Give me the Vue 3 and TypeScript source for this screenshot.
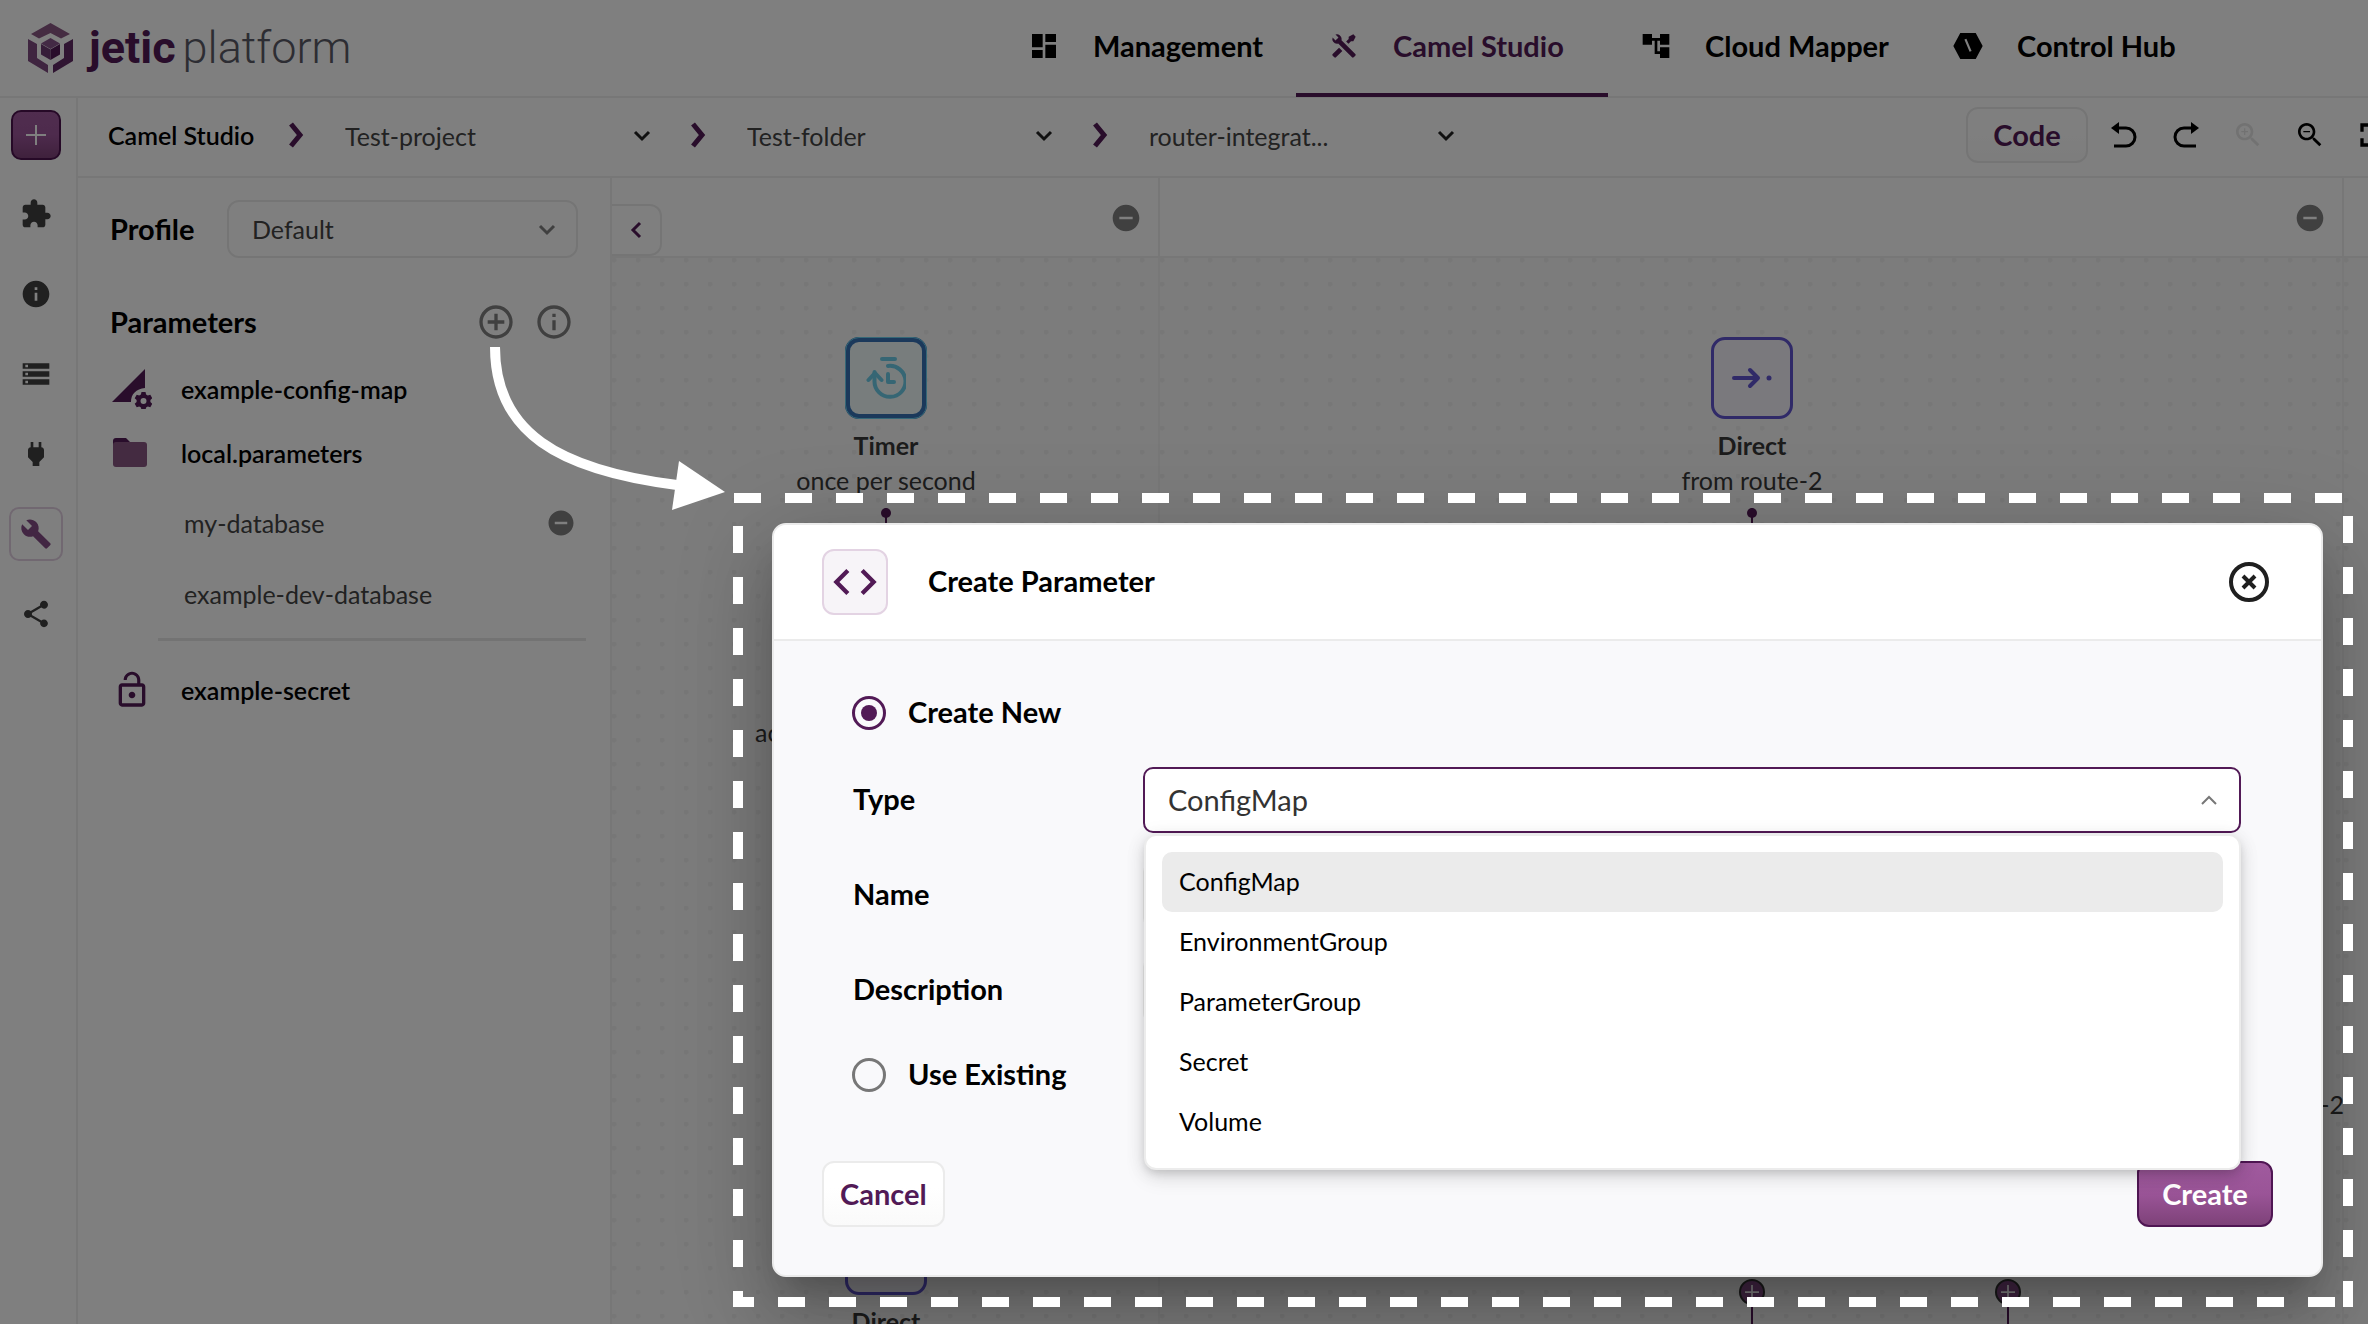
<script setup lang="ts">
import { ref } from 'vue'

const disc = 'M12 2C6.48 2 2 6.48 2 12s4.48 10 10 10 10-4.48 10-10S17.52 2 12 2z'
const ring = disc + 'm0 18c-4.41 0-8-3.59-8-8s3.59-8 8-8 8 3.59 8 8-3.59 8-8 8z'
const lens =
  'M15.5 14h-.79l-.28-.27C15.41 12.59 16 11.11 16 9.5 16 5.91 13.09 3 9.5 3S3 5.91 3 9.5 5.91 16 9.5 16c1.61 0 3.09-.59 4.23-1.57l.27.28v.79l5 4.99L20.49 19l-4.99-5zm-6 0C7.01 14 5 11.99 5 9.5S7.01 5 9.5 5 14 7.01 14 9.5 11.99 14 9.5 14z'

const icons = {
  management: 'M3 13h8V3H3v10zm0 8h8v-6H3v6zm10 0h8V11h-8v10zm0-18v6h8V3h-8z',
  studio:
    'M21.71 20.29L20.29 21.71A1 1 0 0 1 18.88 21.71L7 9.85A3.81 3.81 0 0 1 6 10A4 4 0 0 1 2.22 4.7L4.76 7.24L5.29 6.71L6.71 5.29L7.24 4.76L4.7 2.22A4 4 0 0 1 10 6A3.81 3.81 0 0 1 9.85 7L21.71 18.88A1 1 0 0 1 21.71 20.29M2.29 18.88A1 1 0 0 0 2.29 20.29L3.71 21.71A1 1 0 0 0 5.12 21.71L10.59 16.25L7.76 13.42M20 2L16 4V6L13.83 8.17L15.83 10.17L18 8H20L22 4Z',
  mapper: 'M22 11V3h-7v3H9V3H2v8h7V8h2v10h4v3h7v-8h-7v3h-2V8h2v3z',
  hub: 'M1 12L6.2 2.3h11.6L23 12l-5.2 9.7H6.2zM9.3 7.2l3.9 9.2 1.5-.6-3.9-9.2z',
  puzzle:
    'M20.5 11H19V7c0-1.1-.9-2-2-2h-4V3.5C13 2.12 11.88 1 10.5 1S8 2.12 8 3.5V5H4c-1.1 0-1.99.9-1.99 2v3.8H3.5c1.49 0 2.7 1.21 2.7 2.7s-1.21 2.7-2.7 2.7H2V20c0 1.1.9 2 2 2h3.8v-1.5c0-1.49 1.21-2.7 2.7-2.7 1.49 0 2.7 1.21 2.7 2.7V22H17c1.1 0 2-.9 2-2v-4h1.5c1.38 0 2.5-1.12 2.5-2.5S21.88 11 20.5 11z',
  info: disc + 'm1 15h-2v-6h2v6zm0-8h-2V7h2v2z',
  storage:
    'M2 20h20v-4H2v4zm2-3h2v2H4v-2zM2 4v4h20V4H2zm4 3H4V5h2v2zm-4 7h20v-4H2v4zm2-3h2v2H4v-2z',
  plug: 'M16.01 7L16 3h-2v4h-4V3H8v4h-.01C7 6.99 6 7.99 6 8.99v5.49L9.5 18v3h5v-3l3.5-3.51v-5.5c0-1-1-2-1.99-1.99z',
  wrench:
    'M22.7 19l-9.1-9.1c.9-2.3.4-5-1.5-6.9-2-2-5-2.4-7.4-1.3L9 6 6 9 1.6 4.7C.4 7.1.9 10.1 2.9 12.1c1.9 1.9 4.6 2.4 6.9 1.5l9.1 9.1c.4.4 1 .4 1.4 0l2.3-2.3c.5-.4.5-1.1.1-1.4z',
  share:
    'M18 16.08c-.76 0-1.44.3-1.96.77L8.91 12.7c.05-.23.09-.46.09-.7s-.04-.47-.09-.7l7.05-4.11c.54.5 1.25.81 2.04.81 1.66 0 3-1.34 3-3s-1.34-3-3-3-3 1.34-3 3c0 .24.04.47.09.7L8.04 9.81C7.5 9.31 6.79 9 6 9c-1.66 0-3 1.34-3 3s1.34 3 3 3c.79 0 1.5-.31 2.04-.81l7.12 4.16c-.05.21-.08.43-.08.65 0 1.61 1.31 2.92 2.92 2.92s2.92-1.31 2.92-2.92c0-1.61-1.31-2.92-2.92-2.92z',
  minus: disc + 'm5 11H7v-2h10v2z',
  addOutline: ring + 'M13 7h-2v4H7v2h4v4h2v-4h4v-2h-4V7z',
  infoOutline: ring + 'M11 7h2v2h-2zm0 4h2v6h-2z',
  lockOpen:
    'M12 17c1.1 0 2-.9 2-2s-.9-2-2-2-2 .9-2 2 .9 2 2 2zm6-9h-1V6c0-2.76-2.24-5-5-5S7 3.24 7 6h1.9c0-1.71 1.39-3.1 3.1-3.1 1.71 0 3.1 1.39 3.1 3.1v2H6c-1.1 0-2 .9-2 2v10c0 1.1.9 2 2 2h12c1.1 0 2-.9 2-2V10c0-1.1-.9-2-2-2zm0 12H6V10h12v10z',
  zoomIn: lens + 'M12 10h-2v2H9v-2H7V9h2V7h1v2h2v1z',
  zoomOut: lens + 'M7 9h5v1H7z',
  fullscreen: 'M7 14H5v5h5v-2H7v-3zm-2-4h2V7h3V5H5v5zm12 7h-3v2h5v-5h-2v3zM14 5v2h3v3h2V5h-5z',
  code: 'M9.4 16.6L4.8 12l4.6-4.6L8 6l-6 6 6 6 1.4-1.4zm5.2 0l4.6-4.6-4.6-4.6L16 6l6 6-6 6-1.4-1.4z',
}

const tabs = [
  { label: 'Management', icon: icons.management, size: 32, active: false },
  { label: 'Camel Studio', icon: icons.studio, size: 28, active: true },
  { label: 'Cloud Mapper', icon: icons.mapper, size: 32, active: false },
  { label: 'Control Hub', icon: icons.hub, size: 32, active: false },
]

const tools = [
  { label: 'Components', icon: icons.puzzle, active: false },
  { label: 'Information', icon: icons.info, active: false },
  { label: 'Resources', icon: icons.storage, active: false },
  { label: 'Connections', icon: icons.plug, active: false },
  { label: 'Parameters', icon: icons.wrench, active: true },
  { label: 'Share', icon: icons.share, active: false },
]

const crumbs = ['Test-project', 'Test-folder', 'router-integrat...']
const types = ['ConfigMap', 'EnvironmentGroup', 'ParameterGroup', 'Secret', 'Volume']
const type = ref('ConfigMap')
const mode = ref('new')
const name = ref('')
const description = ref('')
</script>

<template>
  <div class="page">
    <header class="topbar">
      <a class="logo" href="#">
        <svg class="logo-mark" viewBox="0 0 46 50" aria-hidden="true">
          <path d="M22.500 0L42 11l-9 4.500L22.500 10 11 15.500 3 11z" fill="#8a5884" />
          <path d="M0 16l9 5v14l11 7v8L0 38z" fill="#7e4a80" />
          <path d="M45 16v22L25 50v-8l11-7V21z" fill="#602a64" />
          <path d="M22.500 15l9.500 5.500-9.500 5.500-9.500-5.500z" fill="#86548a" />
          <path d="M13 21l9.500 5.500V37L13 31.500z" fill="#6c3a72" />
          <path d="M32 21l-9.500 5.500V37l9.500-5.500z" fill="#531b57" />
        </svg>
        <span class="logo-name">jetic</span>
        <span class="logo-sub">platform</span>
      </a>
      <nav class="tabs">
        <a v-for="tab in tabs" :key="tab.label" href="#" class="tab" :class="{ active: tab.active }">
          <svg class="tab-icon" viewBox="0 0 32 32" aria-hidden="true">
            <svg :x="(32 - tab.size) / 2" :y="(32 - tab.size) / 2" :width="tab.size" :height="tab.size" viewBox="0 0 24 24">
              <path :d="tab.icon" fill="currentColor" fill-rule="evenodd" />
            </svg>
          </svg>
          {{ tab.label }}
        </a>
      </nav>
    </header>

    <div class="workspace">
      <aside class="rail">
        <button class="add" type="button" aria-label="Add">
          <svg viewBox="0 0 20 20"><path d="M10 0v20M0 10h20" stroke="#fff" stroke-width="2" /></svg>
        </button>
        <button
          v-for="tool in tools"
          :key="tool.label"
          type="button"
          class="tool"
          :class="{ active: tool.active }"
          :aria-label="tool.label"
        >
          <svg viewBox="0 0 24 24"><path :d="tool.icon" fill="currentColor" fill-rule="evenodd" /></svg>
        </button>
      </aside>

      <div class="main">
        <div class="subbar">
          <a class="crumb-root" href="#">Camel Studio</a>
          <template v-for="crumb in crumbs" :key="crumb">
            <svg class="sep" viewBox="0 0 24 28" aria-hidden="true"><path d="M7 3l9 11-9 11" /></svg>
            <span class="crumb">
              <select :aria-label="crumb">
                <option>{{ crumb }}</option>
              </select>
              <svg class="down dark" viewBox="0 0 18 12" aria-hidden="true"><path d="M2 2l7 7 7-7" /></svg>
            </span>
          </template>
          <div class="actions">
            <button class="btn code-btn" type="button">Code</button>
            <button class="action" type="button" aria-label="Undo">
              <svg class="turn" viewBox="0 0 28 28">
                <path d="M7 7h9a9 9 0 0 1 0 18H4" fill="none" stroke="#000" stroke-width="3" />
                <path d="M1 7l8-6v12z" />
              </svg>
            </button>
            <button class="action" type="button" aria-label="Redo">
              <svg class="turn" viewBox="0 0 28 28">
                <path d="M21 7h-9a9 9 0 0 0 0 18h12" fill="none" stroke="#000" stroke-width="3" />
                <path d="M27 7l-8-6v12z" />
              </svg>
            </button>
            <button class="action faded" type="button" aria-label="Zoom in" disabled>
              <svg viewBox="0 0 24 24"><path :d="icons.zoomIn" /></svg>
            </button>
            <button class="action" type="button" aria-label="Zoom out">
              <svg viewBox="0 0 24 24"><path :d="icons.zoomOut" /></svg>
            </button>
            <button class="action" type="button" aria-label="Fullscreen">
              <svg class="wide" viewBox="0 0 24 24"><path :d="icons.fullscreen" /></svg>
            </button>
          </div>
        </div>

        <div class="panes">
          <section class="sidebar">
            <div class="profile">
              <label for="profile">Profile</label>
              <span class="profile-field">
                <select id="profile">
                  <option>Default</option>
                </select>
                <svg class="down" viewBox="0 0 18 12" aria-hidden="true"><path d="M2 2l7 7 7-7" /></svg>
              </span>
            </div>
            <div class="section-head">
              <h2>Parameters</h2>
              <button type="button" aria-label="Add parameter">
                <svg viewBox="0 0 24 24"><path :d="icons.addOutline" fill="currentColor" /></svg>
              </button>
              <button type="button" aria-label="About parameters">
                <svg viewBox="0 0 24 24"><path :d="icons.infoOutline" fill="currentColor" /></svg>
              </button>
            </div>
            <ul class="params">
              <li class="param">
                <svg class="param-icon" viewBox="0 0 40 40" aria-hidden="true">
                  <path d="M0 33L33 0v19c-9 1-14 6-14 14z" fill="#521a56" />
                  <path
                    fill="#521a56"
                    fill-rule="evenodd"
                    d="M29.500 23h4l.6 2.500 1.700 1 2.500-.8 2 3.500-1.900 1.800v2l1.900 1.800-2 3.500-2.500-.8-1.700 1-.6 2.500h-4l-.6-2.500-1.700-1-2.500.8-2-3.500 1.900-1.800v-2l-1.900-1.800 2-3.500 2.500.8 1.700-1zM31.500 29a3 3 0 1 0 0 6 3 3 0 0 0 0-6z"
                  />
                </svg>
                <span>example-config-map</span>
              </li>
              <li class="param">
                <svg class="param-icon" viewBox="0 0 40 40" aria-hidden="true">
                  <path d="M1 10V8a3 3 0 0 1 3-3h10l4 4v4H1z" fill="#521a56" />
                  <rect x="1" y="9" width="34" height="25" rx="3" fill="#885682" />
                </svg>
                <span>local.parameters</span>
              </li>
              <li>
                <ul class="children">
                  <li>
                    <span>my-database</span>
                    <button type="button" aria-label="Remove my-database">
                      <svg viewBox="0 0 24 24"><path :d="icons.minus" fill="currentColor" /></svg>
                    </button>
                  </li>
                  <li><span>example-dev-database</span></li>
                </ul>
              </li>
              <li class="param secret">
                <svg class="param-icon" viewBox="0 0 24 24" aria-hidden="true">
                  <path :d="icons.lockOpen" fill="#521a56" />
                </svg>
                <span>example-secret</span>
              </li>
            </ul>
          </section>

          <section class="canvas">
            <button class="collapse" type="button" aria-label="Collapse panel">
              <svg viewBox="0 0 12 18"><path d="M10 2L3 9l7 7" /></svg>
            </button>
            <div class="lane lane-a">
              <div class="lane-head">
                <button type="button" aria-label="Collapse lane">
                  <svg viewBox="0 0 24 24"><path :d="icons.minus" fill="currentColor" /></svg>
                </button>
              </div>
              <div class="lane-body">
                <div class="node node-timer">
                  <div class="tile timer">
                    <svg viewBox="0 0 40 44" aria-hidden="true">
                      <path d="M16 3h13" />
                      <path d="M22 10a15.500 15.500 0 1 1-13.500 15V16" />
                      <path d="M2.500 24l6.500-7 6.500 7" />
                      <path d="M22 18v8h6" />
                    </svg>
                  </div>
                  <strong>Timer</strong>
                  <span>once per second</span>
                </div>
                <i class="stem stem-a"></i>
                <span class="clipped action-label">ac</span>
                <div class="node node-lower">
                  <div class="tile direct"></div>
                  <strong>Direct</strong>
                </div>
              </div>
            </div>
            <div class="lane lane-b">
              <div class="lane-head">
                <button type="button" aria-label="Collapse lane">
                  <svg viewBox="0 0 24 24"><path :d="icons.minus" fill="currentColor" /></svg>
                </button>
              </div>
              <div class="lane-body">
                <div class="node node-direct">
                  <div class="tile direct">
                    <svg viewBox="0 0 44 44" aria-hidden="true">
                      <path d="M4 22h24M20 14l8 8-8 8" />
                      <circle cx="39" cy="22" r="2.500" />
                    </svg>
                  </div>
                  <strong>Direct</strong>
                  <span>from route-2</span>
                </div>
                <i class="stem stem-b"></i>
                <span class="clipped route-label">-2</span>
                <button class="plus plus-a" type="button" aria-label="Add step">
                  <svg viewBox="0 0 16 16"><path d="M8 0v16M0 8h16" /></svg>
                </button>
                <button class="plus plus-b" type="button" aria-label="Add branch">
                  <svg viewBox="0 0 16 16"><path d="M8 0v16M0 8h16" /></svg>
                </button>
              </div>
            </div>
            <div class="lane lane-c">
              <div class="lane-head"></div>
              <div class="lane-body"></div>
            </div>
          </section>
        </div>
      </div>
    </div>

    <div class="backdrop"></div>

    <div class="callout">
      <section class="dialog" role="dialog" aria-labelledby="dialog-title">
        <header class="dialog-head">
          <span class="badge">
            <svg viewBox="0 0 24 24" aria-hidden="true"><path :d="icons.code" fill="currentColor" /></svg>
          </span>
          <h1 id="dialog-title">Create Parameter</h1>
          <button class="close" type="button" aria-label="Close">
            <svg viewBox="0 0 40 40">
              <circle cx="20" cy="20" r="18" />
              <path d="M14 14l12 12M26 14L14 26" />
            </svg>
          </button>
        </header>
        <form class="form" @submit.prevent>
          <label class="choice">
            <input v-model="mode" type="radio" name="mode" value="new" />
            <span>Create New</span>
          </label>
          <div class="row type-row">
            <label for="type">Type</label>
            <div class="control">
              <select id="type" v-model="type">
                <option v-for="t in types" :key="t">{{ t }}</option>
              </select>
              <svg class="up" viewBox="0 0 18 12" aria-hidden="true"><path d="M2 10l7-7 7 7" /></svg>
              <ul class="menu" role="listbox" aria-label="Type">
                <li v-for="t in types" :key="t" role="option" :aria-selected="t === type" @click="type = t">{{ t }}</li>
              </ul>
            </div>
          </div>
          <div class="row">
            <label for="name">Name</label>
            <div class="control"><input id="name" v-model="name" type="text" /></div>
          </div>
          <div class="row">
            <label for="description">Description</label>
            <div class="control"><input id="description" v-model="description" type="text" /></div>
          </div>
          <label class="choice existing">
            <input v-model="mode" type="radio" name="mode" value="existing" />
            <span>Use Existing</span>
          </label>
          <footer class="dialog-foot">
            <button class="btn" type="button">Cancel</button>
            <button class="btn primary" type="submit">Create</button>
          </footer>
        </form>
      </section>
    </div>

    <svg class="pointer" viewBox="0 0 260 190" aria-hidden="true">
      <path d="M15 7C15 92 78 130 197 145" fill="none" stroke="#fff" stroke-width="10" />
      <path d="M199 121l46 31-53 18z" fill="#fff" />
    </svg>
  </div>
</template>

<style>
body {
  margin: 0;
}
</style>

<style scoped>
* {
  box-sizing: border-box;
}
.page {
  position: relative;
  display: flex;
  flex-direction: column;
  height: 100vh;
  overflow: hidden;
  background: #fff;
  color: #000;
  font-family: Lato, 'Open Sans', sans-serif;
  font-size: 25px;
  line-height: 36px;
}
button,
select,
input {
  margin: 0;
  padding: 0;
  border: 0;
  background: none;
  color: inherit;
  font: inherit;
  appearance: none;
}
svg {
  display: block;
}
ul {
  margin: 0;
  padding: 0;
  list-style: none;
}
h1,
h2 {
  margin: 0;
  font-size: 29px;
  font-weight: 700;
  line-height: 36px;
}
a {
  color: inherit;
  text-decoration: none;
}

/* top bar */
.topbar {
  display: flex;
  flex: none;
  justify-content: space-between;
  height: 98px;
  padding-left: 28px;
  border-bottom: 2px solid #eee;
}
.logo {
  display: flex;
  align-items: center;
  font-family: Roboto, sans-serif;
  font-size: 45px;
}
.logo-mark {
  width: 46px;
  height: 50px;
  margin-right: 15px;
}
.logo-name {
  margin-right: 7px;
  color: #521a56;
  font-weight: 700;
}
.logo-sub {
  color: #5a5a66;
  font-weight: 300;
}
.tabs {
  display: flex;
}
.tab {
  display: flex;
  align-items: center;
  width: 312px;
  height: 97px;
  padding: 0 0 2px 32px;
  border-bottom: 4px solid transparent;
  font-size: 29px;
  font-weight: 700;
}
.tab:first-child {
  width: 300px;
}
.tab:last-child {
  width: 448px;
}
.tab.active {
  border-color: #521a56;
  color: #521a56;
}
.tab-icon {
  width: 32px;
  height: 32px;
  margin-right: 33px;
}

/* left rail */
.workspace {
  display: flex;
  flex: 1;
  min-height: 0;
}
.rail {
  display: flex;
  flex: none;
  flex-direction: column;
  align-items: center;
  width: 78px;
  padding: 12px 4px 0 0;
  border-right: 2px solid #eee;
}
.add {
  display: grid;
  place-items: center;
  width: 50px;
  height: 50px;
  margin-bottom: 27px;
  border: 2px solid #4c134f;
  border-radius: 10px;
  background: linear-gradient(#a05a9e, #9c569a 50%, #7e4279);
}
.add svg {
  width: 20px;
  height: 20px;
}
.tool {
  display: grid;
  place-items: center;
  width: 54px;
  height: 54px;
  margin-bottom: 26px;
  border: 2px solid transparent;
  border-radius: 10px;
  color: #404040;
}
.tool svg {
  width: 32px;
  height: 32px;
}
.tool.active {
  border-color: #e2d0e2;
  color: #844c86;
}

/* breadcrumb bar */
.main {
  display: flex;
  flex: 1;
  flex-direction: column;
  min-width: 0;
}
.subbar {
  display: flex;
  flex: none;
  gap: 24px;
  align-items: center;
  height: 80px;
  padding: 0 0 4px 30px;
  border-bottom: 2px solid #eee;
}
.crumb-root {
  width: 152px;
  font-weight: 600;
  white-space: nowrap;
}
.sep {
  flex: none;
  width: 24px;
  height: 28px;
  fill: none;
  stroke: #521a56;
  stroke-width: 5;
}
.crumb {
  position: relative;
  flex: none;
  width: 330px;
}
.crumb select {
  width: 100%;
  padding: 2px 0 0 13px;
  color: #444;
}
.down {
  position: absolute;
  top: 50%;
  right: 11px;
  width: 18px;
  height: 12px;
  margin-top: -5px;
  fill: none;
  stroke: #808080;
  stroke-width: 3;
}
.down.dark {
  stroke: #222;
}
.actions {
  display: flex;
  align-items: center;
  margin: 0 -35px 0 auto;
}
.action {
  display: grid;
  place-items: center;
  width: 62px;
  height: 54px;
}
.action svg {
  width: 32px;
  height: 32px;
}
.action svg.turn {
  width: 28px;
  height: 28px;
}
.action svg.wide {
  width: 40px;
  height: 40px;
}
.faded {
  opacity: 0.1;
}
.btn {
  height: 66px;
  padding: 0 16px;
  border: 2px solid #ebebeb;
  border-radius: 12px;
  background: linear-gradient(#fff 40%, #fafafa);
  color: #521a56;
  font-size: 29px;
  font-weight: 700;
}
.code-btn {
  width: 122px;
  height: 56px;
  margin-right: 5px;
}

/* parameters sidebar */
.panes {
  display: flex;
  flex: 1;
  min-height: 0;
}
.sidebar {
  flex: none;
  width: 534px;
  padding: 22px 24px 0 32px;
  border-right: 2px solid #eee;
}
.profile {
  display: flex;
  align-items: center;
  padding-right: 8px;
}
.profile label {
  width: 117px;
  font-size: 29px;
  font-weight: 700;
}
.profile-field {
  position: relative;
  flex: 1;
}
.profile-field select {
  width: 100%;
  height: 58px;
  padding-left: 23px;
  border: 2px solid #ebebeb;
  border-radius: 12px;
  color: #444;
}
.profile-field .down {
  right: 22px;
}
.section-head {
  display: flex;
  gap: 18px;
  align-items: center;
  margin: 44px 12px 15px 0;
}
.section-head h2 {
  flex: 1;
}
.section-head svg {
  width: 40px;
  height: 40px;
}
.section-head button {
  color: #808080;
}
.param {
  display: flex;
  gap: 29px;
  align-items: center;
  height: 64px;
  padding-left: 2px;
  font-weight: 600;
}
.param-icon {
  width: 40px;
  height: 40px;
}
.children {
  margin: 2px 0 17px 48px;
  padding: 0 10px 9px 26px;
  border-bottom: 3px solid #e6e6e6;
  color: #444;
}
.children li {
  display: flex;
  align-items: center;
  justify-content: space-between;
  height: 71px;
}
.children button,
.lane-head button {
  color: #808080;
}
.children svg {
  width: 30px;
  height: 30px;
}

/* flow canvas */
.canvas {
  position: relative;
  display: flex;
  flex: 1;
  min-width: 0;
  overflow: hidden;
  isolation: isolate;
}
.lane {
  display: flex;
  flex: none;
  flex-direction: column;
}
.lane-a {
  width: 548px;
}
.lane-b {
  width: 1184px;
}
.lane-c {
  flex: 1;
}
.lane-head {
  display: flex;
  flex: none;
  align-items: center;
  justify-content: flex-end;
  height: 80px;
  padding: 2px 16px 0 0;
  border-right: 2px solid #eee;
  border-bottom: 2px solid #eee;
}
.lane-head svg {
  width: 32px;
  height: 32px;
}
.lane-body {
  position: relative;
  flex: 1;
  border-right: 2px solid #f0f0f0;
  background: radial-gradient(circle at 2px 2px, #efefef 2px, transparent 3px) 0 0 / 24px 24px #f8f8f8;
}
.lane-c .lane-head,
.lane-c .lane-body {
  border-right: 0;
}
.collapse {
  position: absolute;
  z-index: 1;
  top: 26px;
  left: 0;
  display: grid;
  place-items: center;
  width: 50px;
  height: 52px;
  border: 2px solid #ebebeb;
  border-left: 0;
  border-radius: 0 12px 12px 0;
}
.collapse svg {
  width: 12px;
  height: 18px;
  fill: none;
  stroke: #521a56;
  stroke-width: 3;
}
.node {
  position: absolute;
  display: flex;
  flex-direction: column;
  align-items: center;
  width: 240px;
  color: #383838;
  line-height: 35px;
}
.node-timer {
  top: 79px;
  left: 154px;
}
.node-lower {
  top: 955px;
  left: 154px;
}
.node-direct {
  top: 79px;
  left: 472px;
}
.tile {
  display: grid;
  place-items: center;
  width: 82px;
  height: 82px;
  margin-bottom: 9px;
  border-radius: 14px;
}
.tile svg {
  fill: none;
  stroke-linecap: round;
  stroke-linejoin: round;
  stroke-width: 4;
}
.timer {
  border: 5px solid #3672b6;
  outline: 1px solid #6ad0ee;
  outline-offset: -1px;
  background: #f0fafb;
}
.timer svg {
  width: 40px;
  height: 44px;
  stroke: #6ccde8;
}
.direct {
  border: 3px solid #6054d0;
  background: #f4f2fb;
}
.direct svg {
  width: 44px;
  height: 44px;
  stroke: #6054d0;
}
.direct circle {
  fill: #6054d0;
  stroke: none;
}
.stem {
  position: absolute;
  top: 250px;
  width: 2px;
  height: 40px;
  background: #521a56;
}
.stem::before {
  position: absolute;
  left: -4px;
  width: 10px;
  height: 10px;
  border-radius: 50%;
  background: #521a56;
  content: '';
}
.stem-a {
  left: 273px;
}
.stem-b {
  left: 591px;
}
.clipped {
  position: absolute;
  color: #383838;
}
.action-label {
  top: 456px;
  left: 143px;
}
.route-label {
  top: 828px;
  right: -2px;
}
.plus {
  position: absolute;
  top: 1021px;
  display: grid;
  place-items: center;
  width: 26px;
  height: 26px;
  border: 2px solid #333;
  border-radius: 50%;
  background: #844c86;
}
.plus::after {
  position: absolute;
  top: 22px;
  left: 10px;
  width: 2px;
  height: 40px;
  background: #521a56;
  content: '';
}
.plus svg {
  width: 14px;
  height: 14px;
  stroke: #fff;
  stroke-width: 2;
}
.plus-a {
  left: 579px;
}
.plus-b {
  left: 835px;
}

/* overlay, dashed highlight and arrow */
.backdrop {
  position: absolute;
  inset: 0;
  background: rgba(0, 0, 0, 0.5);
}
.callout {
  position: absolute;
  top: 493px;
  right: 15px;
  left: 733px;
  padding: 30px 30px 30px 39px;
}
.callout::before {
  position: absolute;
  inset: 0;
  z-index: 1;
  background:
    repeating-linear-gradient(90deg, #fff 0 27px, transparent 27px 51px) 1px 0 / calc(100% - 11px) 10px no-repeat,
    repeating-linear-gradient(90deg, #fff 0 27px, transparent 27px 51px) -6px 100% / calc(100% - 10px) 10px no-repeat,
    repeating-linear-gradient(#fff 0 27px, transparent 27px 51px) 0 33px / 10px 100% no-repeat,
    repeating-linear-gradient(#fff 0 27px, transparent 27px 51px) 100% 23px / 10px 100% no-repeat;
  content: '';
  pointer-events: none;
}
.pointer {
  position: absolute;
  top: 340px;
  left: 480px;
  width: 260px;
  height: 190px;
}

/* dialog */
.dialog {
  border: 2px solid #ebebeb;
  border-radius: 14px;
  background: #f9f9fb;
  box-shadow:
    0 22px 30px -14px rgba(0, 0, 0, 0.2),
    0 48px 76px 6px rgba(0, 0, 0, 0.14),
    0 18px 92px 16px rgba(0, 0, 0, 0.12);
}
.dialog-head {
  display: flex;
  gap: 40px;
  align-items: center;
  height: 116px;
  padding: 0 52px 0 48px;
  border-bottom: 2px solid #ebebeb;
  border-radius: 12px 12px 0 0;
  background: #fff;
}
.dialog-head h1 {
  flex: 1;
  padding-bottom: 2px;
}
.badge {
  display: grid;
  place-items: center;
  width: 66px;
  height: 66px;
  border: 2px solid #e3d3e3;
  border-radius: 12px;
  background: #f7f4f8;
  color: #521a56;
}
.badge svg {
  width: 52px;
  height: 52px;
}
.close svg {
  width: 40px;
  height: 40px;
  fill: none;
  stroke: #1f1f1f;
  stroke-width: 4;
}
.form {
  padding: 52px 48px 48px;
}
.choice {
  display: flex;
  gap: 22px;
  align-items: center;
  width: fit-content;
  height: 40px;
  margin-left: 30px;
  font-size: 29px;
  font-weight: 700;
}
.choice span {
  padding-bottom: 2px;
}
.choice input {
  display: grid;
  place-items: center;
  width: 34px;
  height: 34px;
  border: 3px solid #777;
  border-radius: 50%;
}
.choice input:checked {
  border-color: #521a56;
}
.choice input:checked::before {
  width: 16px;
  height: 16px;
  border-radius: 50%;
  background: #521a56;
  content: '';
}
.row {
  display: flex;
  align-items: center;
  margin: 29px 32px 0 31px;
}
.type-row {
  margin-top: 34px;
}
.row > label {
  flex: none;
  width: 290px;
  padding-bottom: 2px;
  font-size: 29px;
  font-weight: 700;
}
.control {
  position: relative;
  flex: 1;
}
.control input,
.control select {
  display: block;
  width: 100%;
  height: 66px;
  padding: 0 23px;
  border: 2px solid #ebebeb;
  border-radius: 10px;
  background: #fff;
  color: #333;
  font-size: 29px;
}
.control select {
  border-color: #521a56;
}
.up {
  position: absolute;
  top: 27px;
  right: 23px;
  width: 18px;
  height: 12px;
  fill: none;
  stroke: #777;
  stroke-width: 2;
}
.menu {
  position: absolute;
  z-index: 2;
  top: 67px;
  right: 0;
  left: 1px;
  padding: 16px;
  border: 2px solid #ececec;
  border-radius: 12px;
  background: #fff;
  box-shadow:
    0 4px 8px -2px rgba(0, 0, 0, 0.14),
    0 8px 20px rgba(0, 0, 0, 0.1),
    0 2px 20px rgba(0, 0, 0, 0.08);
}
.menu li {
  padding: 11px 17px 13px;
  border-radius: 10px;
}
.menu li[aria-selected='true'] {
  background: #ebebeb;
}
.existing {
  margin-top: 32px;
}
.dialog-foot {
  display: flex;
  justify-content: space-between;
  margin-top: 66px;
}
.primary {
  width: 136px;
  border-color: #4f1653;
  background: linear-gradient(#a05a9e, #9a5497 50%, #7e4279);
  color: #fff;
}
</style>
